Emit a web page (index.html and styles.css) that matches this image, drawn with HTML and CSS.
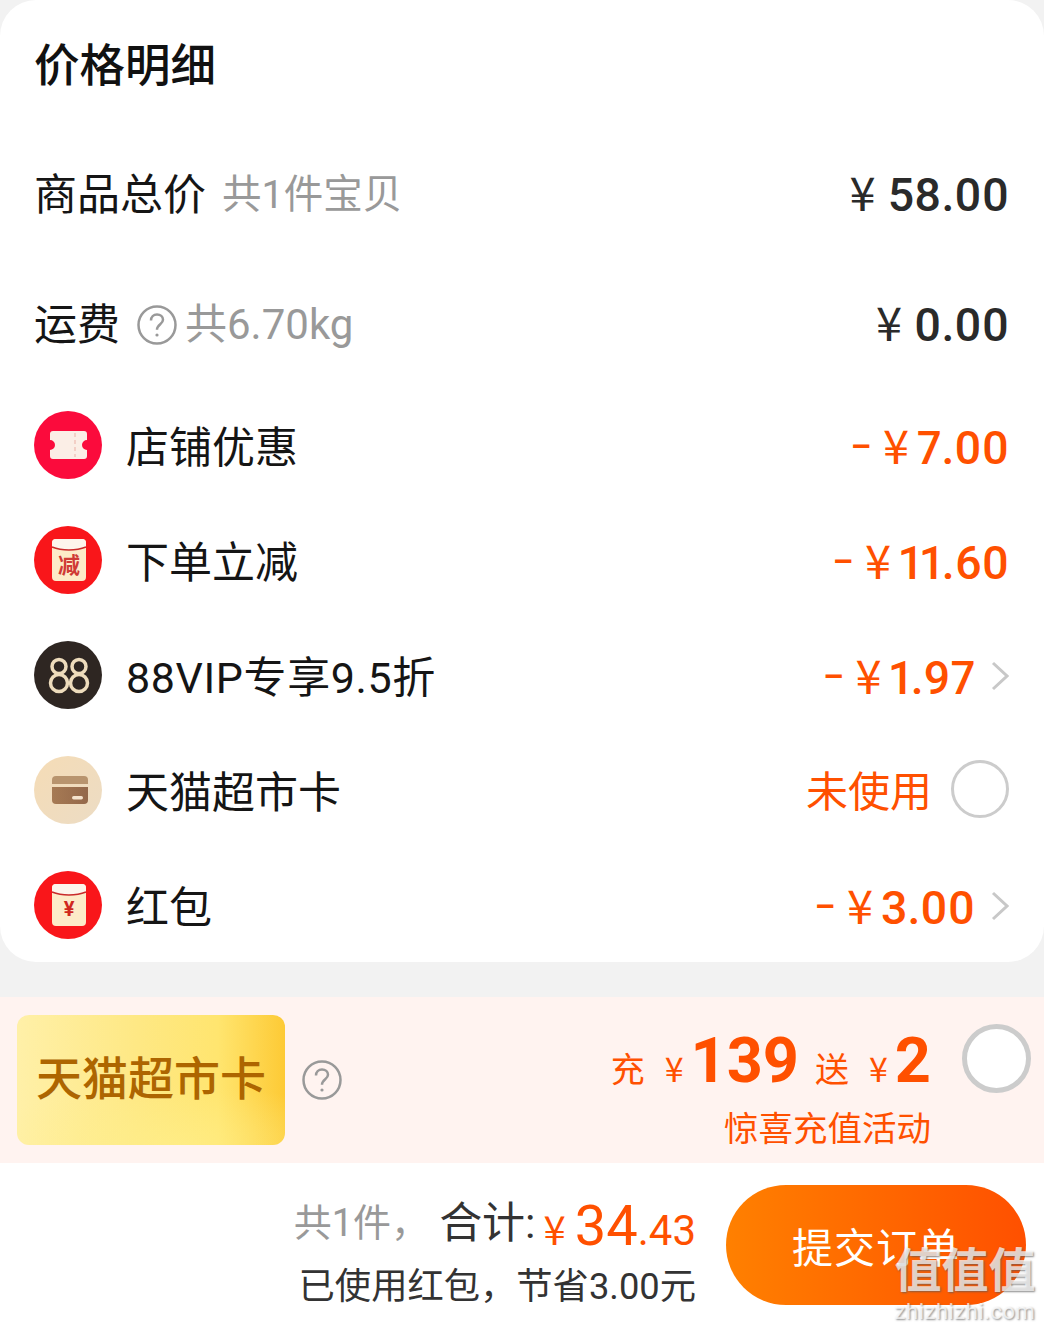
FILE: index.html
```html
<!DOCTYPE html>
<html lang="zh-CN">
<head>
<meta charset="utf-8">
<title>价格明细</title>
<link rel="stylesheet" href="styles.css">
</head>
<body>
<main class="page">
  <section class="card">
    <h1 class="title">价格明细</h1>
    <div class="row row-plain">
      <div class="label">商品总价<span class="muted muted-first">共1件宝贝</span></div>
      <div class="amount"><span class="yen">¥</span>58.00</div>
    </div>
    <div class="row row-plain">
      <div class="label">运费
        <svg class="help help-small" viewBox="0 0 40 40"><circle cx="20" cy="20" r="18.5"/><path d="M14 15.5c0-3.6 2.600-6 6-6s6 2.300 6 5.300c0 4.500-6 4.500-6 10"/><circle class="dot" cx="20" cy="30" r="1.600"/></svg>
        <span class="muted">共6.70kg</span>
      </div>
      <div class="amount"><span class="yen">¥</span>0.00</div>
    </div>
    <div class="row">
      <div class="label">
        <svg class="badge" viewBox="0 0 68 68"><circle cx="34" cy="34" r="34" fill="#fb0b3c"/><path d="M19 20h31a3 3 0 0 1 3 3v6a5 5 0 0 0 0 10v6a3 3 0 0 1-3 3H19a3 3 0 0 1-3-3v-6a5 5 0 0 0 0-10v-6a3 3 0 0 1 3-3z" fill="#fbeee6"/><path d="M41 22v24" stroke="#f3cfc6" stroke-width="2" stroke-dasharray="4 3"/></svg>
        店铺优惠
      </div>
      <div class="amount discount"><span class="minus">–</span><span class="yen">¥</span>7.00</div>
    </div>
    <div class="row">
      <div class="label">
        <svg class="badge" viewBox="0 0 68 68"><circle cx="34" cy="34" r="34" fill="#f9161a"/><rect x="18" y="13" width="34" height="42" rx="4" fill="#fdebc8"/><path d="M18 17a4 4 0 0 1 4-4h26a4 4 0 0 1 4 4v4c-10 4-24 4-34 0z" fill="#fdf5ec"/><path d="M18 21c10 4 24 4 34 0" stroke="#c92a2a" stroke-width="1.500" fill="none"/><text class="badge-text" x="35" y="47">减</text></svg>
        下单立减
      </div>
      <div class="amount discount"><span class="minus">–</span><span class="yen">¥</span>11.60</div>
    </div>
    <div class="row">
      <div class="label label-wide">
        <svg class="badge" viewBox="0 0 68 68"><circle cx="34" cy="34" r="34" fill="#2e2622"/><g fill="none" stroke="#eedcbc" stroke-width="3.500"><circle cx="25" cy="25.500" r="7"/><circle cx="25" cy="42" r="8.500"/><circle cx="45" cy="25.500" r="7"/><circle cx="45" cy="42" r="8.500"/></g></svg>
        88VIP专享9.5折
      </div>
      <div class="amount-wrap">
        <div class="amount discount"><span class="minus">–</span><span class="yen">¥</span>1.97</div>
        <svg class="chevron" viewBox="0 0 18 30"><path d="M2 2l14 13L2 28"/></svg>
      </div>
    </div>
    <div class="row">
      <div class="label">
        <svg class="badge" viewBox="0 0 68 68"><defs><linearGradient id="beige" x1="0" y1="0" x2="1" y2="1"><stop offset="0" stop-color="#f5dcb6"/><stop offset="1" stop-color="#ecdcc4"/></linearGradient><linearGradient id="wallet" x1="0" y1="0" x2="1" y2="0"><stop offset="0" stop-color="#a67a54"/><stop offset="1" stop-color="#94684a"/></linearGradient></defs><circle cx="34" cy="34" r="34" fill="url(#beige)"/><path d="M18 28v-4a4 4 0 0 1 4-4h28a4 4 0 0 1 4 4v4z" fill="#b8946e"/><path d="M18 31h36v13a4 4 0 0 1-4 4H22a4 4 0 0 1-4-4z" fill="url(#wallet)"/><rect x="38" y="40" width="11" height="3.500" rx="1.700" fill="#f5e3cd"/></svg>
        天猫超市卡
      </div>
      <div class="amount-wrap">
        <div class="unused">未使用</div>
        <span class="radio"></span>
      </div>
    </div>
    <div class="row row-last">
      <div class="label">
        <svg class="badge" viewBox="0 0 68 68"><circle cx="34" cy="34" r="34" fill="#f9161a"/><rect x="18" y="13" width="34" height="42" rx="4" fill="#fdebc8"/><path d="M18 17a4 4 0 0 1 4-4h26a4 4 0 0 1 4 4v4c-10 4-24 4-34 0z" fill="#fdf5ec"/><path d="M18 21c10 4 24 4 34 0" stroke="#c92a2a" stroke-width="1.500" fill="none"/><text class="badge-text badge-yen" x="35" y="45">¥</text></svg>
        红包
      </div>
      <div class="amount-wrap">
        <div class="amount discount"><span class="minus">–</span><span class="yen">¥</span>3.00</div>
        <svg class="chevron" viewBox="0 0 18 30"><path d="M2 2l14 13L2 28"/></svg>
      </div>
    </div>
  </section>

  <section class="promo">
    <div class="promo-left">
      <div class="gold-card"><span>天猫超市卡</span></div>
      <svg class="help help-large" viewBox="0 0 40 40"><circle cx="20" cy="20" r="18.500"/><path d="M14 15.500c0-3.600 2.600-6 6-6s6 2.300 6 5.300c0 4.500-6 4.500-6 10"/><circle class="dot" cx="20" cy="30" r="1.600"/></svg>
    </div>
    <div class="promo-right">
      <div class="promo-text">
        <div class="promo-deal"><span class="deal-word">充</span><span class="deal-yen">¥</span><strong class="deal-num">139</strong><span class="deal-word deal-word-gap">送</span><span class="deal-yen">¥</span><strong class="deal-num">2</strong></div>
        <div class="promo-note">惊喜充值活动</div>
      </div>
      <span class="radio radio-large"></span>
    </div>
  </section>

  <footer class="bar">
    <div class="summary">
      <div class="total-line">
        <span class="count">共1件，</span>
        <span class="sum-label">合计:</span>
        <span class="total"><span class="total-yen">¥</span><span class="total-int">34</span><span class="total-dec">.43</span></span>
      </div>
      <div class="saving">已使用红包，节省3.00元</div>
    </div>
    <button class="submit">提交订单</button>
  </footer>

  <div class="watermark">
    <div class="wm-mark">值值值</div>
    <div class="wm-url">zhizhizhi.com</div>
  </div>
</main>
</body>
</html>
```
FILE: styles.css
```css
* { box-sizing: border-box; }
html, body { margin: 0; padding: 0; }
body {
  background: #f2f2f2;
  font-family: Roboto, "Noto Sans CJK SC", sans-serif;
  color: #111;
}
.page {
  position: relative;
  width: 1044px;
  height: 1328px;
  overflow: hidden;
  display: flex;
  flex-direction: column;
}
.card {
  height: 962px;
  background: #fff;
  border-radius: 36px;
  padding: 0 35px 0 34px;
  display: flex;
  flex-direction: column;
}
.title {
  margin: 0;
  height: 130px;
  padding-bottom: 6px;
  display: flex;
  align-items: center;
  font-size: 45.500px;
  font-weight: 500;
  color: #111;
}
.row {
  height: 115px;
  display: flex;
  align-items: center;
  justify-content: space-between;
  flex: none;
}
.row-plain { height: 130px; }
.row-last { margin-bottom: -3px; }
.label {
  display: flex;
  align-items: center;
  font-size: 43px;
  line-height: 56px;
  color: #151515;
}
.label-wide { letter-spacing: .6px; }
.muted { color: #999; font-size: 42px; margin-left: 8px; }
.muted-first { font-size: 39.500px; margin-left: 16px; }
.help { fill: none; stroke: #999; stroke-width: 2.500; }
.help .dot { fill: #999; stroke: none; }
.help-small { width: 40px; height: 40px; margin-left: 17px; }
.help-large { width: 40px; height: 40px; margin-left: 17px; margin-top: 45px; }
.badge { width: 68px; height: 68px; margin-right: 24px; margin-bottom: 6px; flex: none; }
.badge-text {
  font-size: 22px;
  font-weight: 700;
  text-anchor: middle;
  fill: #d03a35;
}
.badge-yen { font-size: 20px; fill: #d0281e; }
.amount {
  font-size: 46.500px;
  font-weight: 500;
  font-variant-numeric: proportional-nums;
  color: #2a2a2a;
  display: flex;
  align-items: center;
  line-height: 56px;
}
.yen {
  font-family: "Noto Sans CJK SC", sans-serif;
  font-size: 47px;
  font-weight: 400;
  margin-right: 12px;
  margin-bottom: 8px;
}
.discount { color: #ff5000; }
.minus { font-size: 32px; font-weight: 700; margin-right: 12px; margin-bottom: 4px; }
.discount .yen { margin-right: 8px; }
.amount-wrap { display: flex; align-items: center; }
.chevron {
  width: 18px;
  height: 30px;
  margin-left: 16px;
  margin-bottom: 3px;
  fill: none;
  stroke: #c8c8c8;
  stroke-width: 3;
}
.unused { font-size: 42px; color: #ff5000; line-height: 56px; }
.radio {
  display: block;
  width: 58px;
  height: 58px;
  margin-left: 19px;
  margin-top: -7px;
  border: 3.500px solid #ccc;
  border-radius: 50%;
  background: #fff;
  flex: none;
}
.promo {
  margin-top: 35px;
  height: 166px;
  background: #fff3f0;
  display: flex;
  justify-content: space-between;
  padding: 18px 13px 0 17px;
}
.promo-left { display: flex; align-items: flex-start; }
.gold-card {
  width: 268px;
  height: 130px;
  padding-bottom: 10px;
  border-radius: 12px;
  background:
    radial-gradient(ellipse 200px 60px at 160px 130px, rgba(255, 240, 140, .6), rgba(255, 240, 140, 0)),
    linear-gradient(90deg, #fff0a8 0%, #fee884 45%, #ffe56f 75%, #fdca35 100%);
  display: flex;
  align-items: center;
  justify-content: center;
  color: #ad6500;
  font-size: 46px;
  font-weight: 500;
}
.promo-right { display: flex; align-items: flex-start; }
.promo-text {
  display: flex;
  flex-direction: column;
  align-items: flex-end;
  color: #ff5000;
}
.promo-deal { display: flex; align-items: baseline; line-height: 88px; margin-top: 2px; }
.deal-word { font-size: 34px; }
.deal-word-gap { margin-left: 16px; }
.deal-yen {
  font-family: "Noto Sans CJK SC", sans-serif;
  font-size: 34px;
  margin-left: 20px;
  margin-right: 7px;
}
.deal-num { font-size: 63px; font-weight: 700; }
.promo-note { font-size: 34.500px; line-height: 50px; margin-top: -10px; }
.radio-large {
  width: 69px;
  height: 69px;
  border-width: 5px;
  margin-left: 31px;
  margin-top: 9px;
}
.bar {
  flex: 1;
  background: #fff;
  display: flex;
  justify-content: flex-end;
  padding: 22px 18px 0 0;
}
.summary {
  display: flex;
  flex-direction: column;
  align-items: flex-end;
  margin-right: 30px;
}
.total-line { display: flex; align-items: center; height: 68px; }
.count { color: #999; font-size: 38px; margin-right: 10px; }
.sum-label { color: #333; font-size: 43px; margin-right: 8px; }
.total { color: #ff5000; display: flex; align-items: baseline; margin-top: 14px; }
.total-yen {
  font-family: "Noto Sans CJK SC", sans-serif;
  font-size: 40px;
  margin-right: 9px;
}
.total-int { font-size: 56px; }
.total-dec { font-size: 42px; }
.saving { font-size: 36.300px; line-height: 50px; color: #333; margin-top: 9px; }
.submit {
  width: 300px;
  height: 120px;
  border: 0;
  border-radius: 60px;
  background: linear-gradient(90deg, #ff8000, #ff5000);
  color: #fff;
  font: 400 41px Roboto, "Noto Sans CJK SC", sans-serif;
  letter-spacing: 1px;
}
.watermark {
  position: absolute;
  left: 894px;
  top: 1242px;
  width: 142px;
  text-align: center;
  color: rgba(255, 255, 255, .72);
  text-shadow: 1px 1px 2px rgba(90, 90, 90, .7);
}
.wm-mark { font-size: 47px; line-height: 58px; font-weight: 700; white-space: nowrap; }
.wm-url { font-size: 22px; line-height: 24px; letter-spacing: .5px; }
```
